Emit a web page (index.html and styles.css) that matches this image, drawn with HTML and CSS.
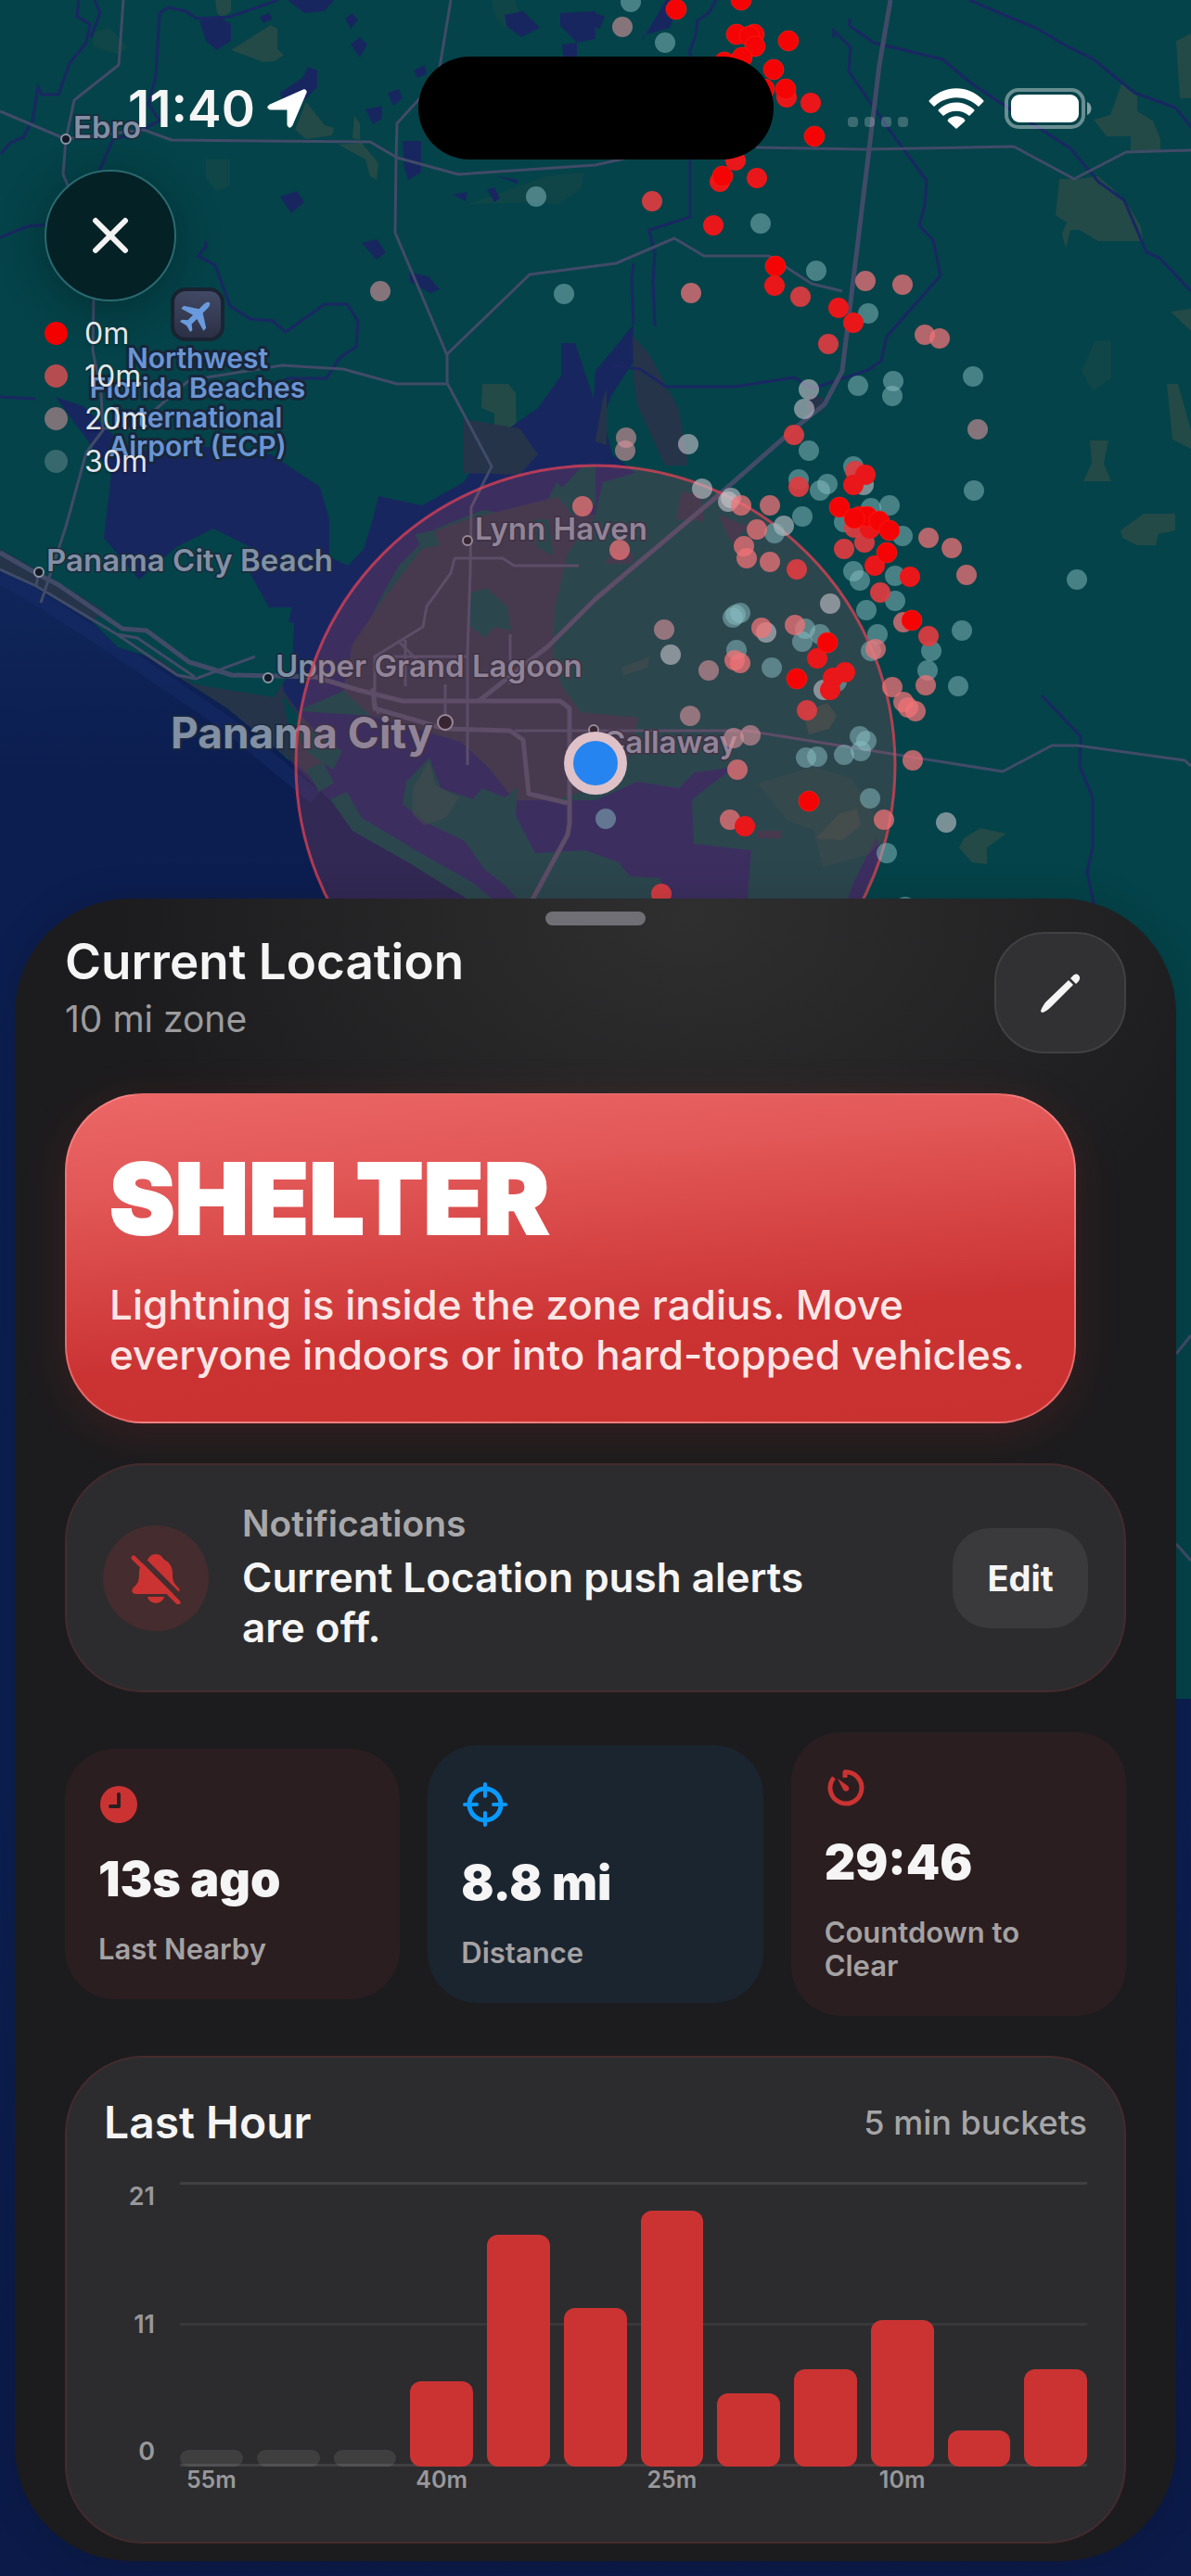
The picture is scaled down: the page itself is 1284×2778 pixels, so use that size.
FILE: index.html
```html
<!DOCTYPE html>
<html lang="en">
<head>
    <meta charset="UTF-8">
    <meta name="viewport" content="width=device-width, initial-scale=1.0">
    <title>Lightning Zone</title>
    <link rel="stylesheet" href="styles.css">
</head>
<body>
    <div class="screen">
        <svg class="map" viewBox="0 0 1284 2778" preserveAspectRatio="xMidYMin slice" aria-label="Map of lightning strikes">
            <defs>
                <linearGradient id="poi" x1="0" y1="0" x2="0" y2="1">
                    <stop offset="0" stop-color="#444b66"/>
                    <stop offset="1" stop-color="#2a2f45"/>
                </linearGradient>
                <linearGradient id="gulf" x1="0" y1="0" x2="0" y2="1">
                    <stop offset="0" stop-color="#10265a"/>
                    <stop offset="0.1" stop-color="#0c1e50"/>
                    <stop offset="0.6" stop-color="#0c1f50"/>
                    <stop offset="1" stop-color="#0b1a48"/>
                </linearGradient>
            </defs>

            <rect class="land" width="1284" height="2778"/>

            <!-- parks and forest -->
            <g class="park">
                <path d="M232 0h17v12l-9 8-6-6z"/>
                <path d="M249 54l43-27 7 4v22l7 6-10 7-12 1z"/>
                <path d="M330 110l20 25 10 3-2 8-28 4-12-10z"/>
                <path d="M382 125l6 8v18l-8-2zM365 156l25-2 18 22-2 18-7-4-5-18z"/>
                <path d="M1210 88l16 16v16l17 10 8 20v12h-32v-15h-26l-14-18 18-5z"/>
                <path d="M1142 193l20 0 22-3 16 14 18 20 12 20 2 16h-48l-20-12h-10l-5 20-4-16 5-12-12-8z"/>
                <path d="M1268 44l16-8v70h-12z"/>
                <path d="M1262 336l22-3v24zM1258 414l12 0 14 50v20l-20-10z"/>
                <path d="M520 414h28l8 10 1 60-14 6-10-14v-30l-14-6z"/>
                <path d="M1175 475h20l-5 25 8 19h-30l9-20z"/>
                <path d="M1233 554h34v18l-18 4-3 12h-20l-16-8-2-8z"/>
                <path d="M1057 893l28 6-21 15v18l-16-2-14-16 5-10z"/>
            </g>
            <g class="park faint">
                <path d="M222 172l26 0v28l-14 6-12-14zM102 34l16-4 20 22-12 6-26-8z"/>
                <path d="M590 190l40-4-4 18-24 16-28-2-68 2z"/>
                <path d="M530 0h25l6 20-16 10-10-10zM1180 368h18v40l-20 14-12-22z"/>
            </g>

            <!-- inland lakes -->
            <g class="water">
                <path d="M215 22l22-4 12 8v18l-15 10-12-10z"/>
                <path d="M302 100l24-16 6-12 10 4v18l-14 14-22 8z"/>
                <path d="M310 0h50l-10 12-22 2zM372 20l8-6 6 8-8 9zM280 18l10-4 4 6-10 5z"/>
                <path d="M378 48l10-8 8 8-8 14zM446 76l12-6 2 10-10 4zM418 100l12-4 4 10-10 8z"/>
                <path d="M394 118l18-4v14l-10 6zM434 152l20 0v34l-14 8-4-12z"/>
                <path d="M302 212l18-6 8 12-14 12zM390 262l16-4 10 14-10 8zM442 294l20 4 12 14-10 4-22-12z"/>
                <path d="M544 16l20-4 18 18-20 10-16-12zM604 14l38-2v30l-20 4-18-18zM606 48l16-2v24l-14-4z"/>
                <path d="M536 190l22 4v4zM525 204l8-2 6 12-6 4zM488 210l16-3-2 10z"/>
                <path d="M692 44l26-44h16l-12 30-28 8zM642 14l10 4-6 14-8-6z"/>
            </g>

            <!-- bays -->
            <g class="water">
                <path d="M60 428L90 438 112 460 142 488 205 480 292 490 345 525 355 560 355 600 375 610 392 592 402 560 408 535 455 545 500 520 530 475 580 440 605 405 605 370 620 370 640 430 642 400 683 350 683 390 660 425 650 450 660 490 685 510 650 520 640 560 600 520 580 560 520 550 470 570 430 610 405 655 385 700 370 745 325 765 305 745 305 695 315 655 290 655 265 610 270 590 230 570 190 590 150 625 112 580 120 510z"/>
                <path d="M305 690L325 767 400 772 497 800 526 827 555 863 598 863 642 863 687 843 732 850 749 833 793 827 765 847 746 863 748 910 810 917 804 990 320 990z"/>
                <path d="M945 902l5 20-18 40-6 20h-16l10-30z"/>
            </g>

            <!-- the Gulf -->
            <path class="gulf" d="M0 614l39 18 87 52 65 45 53 34 51 42 46 43 15 15 65 50 105 60v859h758v966H0z"/>
            <path class="shore" d="M0 622l39 22 87 56 118 80 96 80"/>

            <!-- built-up areas -->
            <g class="urban">
                <path d="M0 592l60 34 70 44 70 30 100-10 6 56 24 32 30 30-20 34-45-37-51-42-53-34-152-97-39-18z"/>
                <path d="M470 572L504 560 600 536 642 556 612 596 598 656 596 706 606 740 626 768 688 774 682 800 672 836 640 850 598 863 555 863 526 827 497 800 400 772 370 745 380 695 414 645z"/>
                <path d="M682 362l18 20 32 60 10 60h-25l-30-66-4-30zM500 452l60 10 20 28-20 22-60-2z"/>
                <path d="M735 530l20 4 4 28-30-2zM775 555l34 14-12 6 2 20-14-16zM660 596h22v12h-30zM817 896h26v8h-26z"/>
                <path d="M870 425l18 4-2 16-14-2zM650 430l4-10v60l-12-4z"/>
            </g>

            <!-- woods and islands lying inside the bays -->
            <g class="land">
                <path d="M185 600l32-14 40 16 6 60 54 10-2 50-20 30-86-14-36-26-46-14-28-28z"/>
                <path d="M305 750l22 30 42 30-10 20-24-16-24-30z"/>
                <path d="M330 830l18-8 12 22-16 10z"/>
                <path d="M356 862l18-8 16 28 60 36 60 34 40 34h-20l-90-56-60-34z"/>
                <path d="M463 817L475 850 510 862 520 850 545 860 558 848 556 880 577 920 631 917 667 930 679 945 712 947 724 990 575 990 547 957 522 937 501 907 459 887 434 867 438 843z"/>
                <path d="M505 640l20-6 22 20 4 26-18-4-10 12-20-16zM575 560l16 0 6 40-18-10zM448 576l20-4 6 16-20 4z"/>
                <path d="M626 504l16-2v44l-24 10-20-24 12-10z"/>
            </g>
            <g class="park">
                <path d="M445 850l18-30 6 26 26 14-14 22-24 8-12-12z" opacity=".5"/>
                <path d="M817 845l60-18 40 12 40 60-20 22-50 14-10-40-28-10z" opacity=".4"/>
                <path d="M866 768l26-10 10 14-8 14-22 6zM904 878l20-6 4 18-20 16-28-2z"/>
                <path d="M670 720l30-12-2 12-26 8z" opacity=".6"/>
            </g>

            <!-- creeks -->
            <g class="creek">
                <path d="M85 0l-2 18 14 8-4 20-18 22-12 34-18 0-4-8-6 36-10 18-14 6-10 12M102 0l6 14-10 26"/>
                <path d="M300 0l-52 18-36 2-12-8-18-4-10 6-4 68-8 30 12 18-26 14-24 6-26 60-20 30-46 4-30 12"/>
                <path d="M222 260v6l-8 10 18 10 16 44 22 14 24 2 14 12 42-30h24l12 18-2 28-18 12-14 22h-42l-26 16-14 0M0 428l38 2"/>
                <path d="M772 0l-8 14-12 8-2 16-6 16v180l-44 14 6 26-2 30 2 48"/>
                <path d="M683 284l-2 16 2 50M660 394l30 4 28 19h74l64-10 20 12 60-20 14-10 6-26 58-66-8-38-15-16 6-22 2-26-44-60-26-38-14-20 2-26-18-18V41"/>
                <path d="M1045 0l42 18 30 12 30 18 32 16 44 36 44 16 20 24M916 20v8l26 18 74 18 34 28 70 46 34 22 30 36 28 20 24 56 14 6 34 36"/>
                <path d="M1123 750l42 44-1 32 14 34v54l-6 26 10 48"/>
            </g>

            <!-- roads -->
            <g class="road">
                <path d="M133 0l-5 70-48 38-9 42-3 38 34 80-2 110 9 46 2 40-18 24-22 80-27 82M0 120l71 30 84-10 30 11 214 2 29 17 66 18 148-10 62-14"/>
                <path d="M486 0l-14 85-44 48-1 38-1 80 56 132v30l48 90-22 44-1 68-3 90v120M110 462h34l60-52 100-16 66 4 58 16h54M482 382l89-86 93-12 63-27 32 19h70l46 30 33 8"/>
                <path d="M490 602h52l12 8h70M490 602l-4 16-26 36-4 22-52 32v18l0 30 4 14M404 708h100M437 690v50M430 692l20 20M550 684v54M480 738v40"/>
                <path d="M815 159l116 2 162-3 65 35 56-29 70-2"/>
                <path d="M0 614l39 18 87 52 65 44 20 4 64-24M126 684l22 4 62 42M42 617l-3 14M555 788h250l276 44 53-28h28l115 16 7 6"/>
                <path d="M1268 1460l16-20M1268 1665l16 18"/>
            </g>
            <g class="road wide">
                <path d="M960 0l-12 70-40 330-19 36-30 24-89 78-128 108-50 50-76 60M0 596l42 24 20 10 70 48 26 2 46 34 46 14 90 2 46 14 48 12h170l10 8v124l-2 12-40 74 8 40 38 44"/>
                <path d="M402 742l2 22 76 22 70 2 14 10 6 58 42 10"/>
            </g>

            <!-- places -->
            <g class="place">
                <circle cx="71" cy="150" r="5"/><text x="79" y="149">Ebro</text>
                <circle cx="42" cy="617" r="5"/><text x="50" y="616">Panama City Beach</text>
                <circle cx="504" cy="583" r="5"/><text x="512" y="582">Lynn Haven</text>
                <circle cx="289" cy="731" r="5"/><text x="297" y="730">Upper Grand Lagoon</text>
                <circle cx="640" cy="787" r="5"/><text x="650" y="812">Callaway</text>
                <circle cx="480" cy="779" r="8"/><text class="city" x="184" y="807">Panama City</text>
            </g>
            <rect x="186" y="312" width="54" height="54" rx="14" fill="url(#poi)" stroke="#1a2432" stroke-width="4"/>
            <path d="M0-18c2 0 3 3 3 5v8l14 9v4L3 4v8l5 4v3l-8-2-8 2v-3l5-4V4l-14 4V4l14-9v-8c0-2 1-5 3-5z" transform="translate(213 339) rotate(45)" fill="#6a9bde"/>
            <g class="airport">
                <text x="213" y="397">Northwest</text>
                <text x="213" y="429">Florida Beaches</text>
                <text x="213" y="461">International</text>
                <text x="213" y="492">Airport (ECP)</text>
            </g>

            <circle class="zone" cx="642" cy="825" r="323"/>
            <g id="strikes"></g>
            <circle cx="642" cy="823" r="34" fill="#dfc1c8"/>
            <circle cx="642" cy="823" r="24" fill="#2684f0"/>
        </svg>

        <header class="status-bar">
            <div class="status-left">
                <span class="clock">11:40</span>
                <svg width="44" height="44" viewBox="0 0 44 44"><path d="M39 2c2-1 4 1 3 3L27 40c-1 3-5 3-5-1V23L4 23c-4 0-4-4-1-5z" fill="#fff" stroke="#fff" stroke-linejoin="round"/></svg>
            </div>
            <div class="island"></div>
            <div class="status-right">
                <div class="signal"><i></i><i></i><i></i><i></i></div>
                <svg width="60" height="44" viewBox="0 0 60 44" fill="#fff">
                    <path d="M1 13C17-4 43-4 59 13q1 1 0 2l-5 5c-14-13-34-13-48 0l-5-5q-1-1 0-2z"/>
                    <path d="M11 23c11-10 27-10 38 0q1 1 0 2l-5 5c-8-7-20-7-28 0l-5-5q-1-1 0-2z"/>
                    <path d="M21 34c5-5 13-5 18 0q1 1 0 2l-9 8-9-8q-1-1 0-2z"/>
                </svg>
                <svg width="96" height="44" viewBox="0 0 96 44">
                    <rect x="2" y="2" width="83" height="40" rx="13" fill="none" stroke="#fff" stroke-opacity=".4" stroke-width="4"/>
                    <rect x="7" y="7" width="73" height="30" rx="9" fill="#fff"/>
                    <path d="M89 15c6 2 6 12 0 14z" fill="#fff" fill-opacity=".5"/>
                </svg>
            </div>
        </header>

        <div class="map-controls">
            <button class="close-btn" aria-label="Close">
                <svg width="40" height="40" viewBox="0 0 40 40"><path d="M4 4l32 32M36 4L4 36" stroke="#f2f2f2" stroke-width="6" stroke-linecap="round"/></svg>
            </button>
            <ul class="legend">
                <li><span class="dot now"></span>0m</li>
                <li><span class="dot ten"></span>10m</li>
                <li><span class="dot twenty"></span>20m</li>
                <li><span class="dot thirty"></span>30m</li>
            </ul>
        </div>

        <main class="sheet">
            <div class="grabber"></div>
            <div class="sheet-header">
                <div>
                    <h1>Current Location</h1>
                    <p class="zone-size">10 mi zone</p>
                </div>
                <button class="edit-zone" aria-label="Edit zone">
                    <svg width="44" height="44" viewBox="0 0 44 44" fill="#f5f5f5">
                        <path d="M31 8l5 5L12 37c-3 3-6 5-9 6-1 0-2-1-2-2 1-3 3-6 5-9z"/>
                        <path d="M33 6l3-3c2-2 5-2 6 0 2 2 1 4 0 6l-3 3z"/>
                    </svg>
                </button>
            </div>

            <section class="alert-banner">
                <h2>SHELTER</h2>
                <p>Lightning is inside the zone radius. Move everyone indoors or into hard-topped vehicles.</p>
            </section>

            <section class="card notifications">
                <div class="bell">
                    <svg width="54" height="56" viewBox="0 0 54 56">
                        <path d="M27 2c5 0 7 3 9 6 7 3 9 9 9 15 0 9 2 11 6 15 3 3 1 7-3 7H6c-5 0-6-4-3-7 4-4 6-6 6-15 0-6 2-12 9-15 2-3 4-6 9-6zM18 48h18c-2 9-16 9-18 0z" fill="#cb3333"/>
                        <path d="M7 2l48 48" stroke="#452c2e" stroke-width="6"/>
                        <path d="M3 6l48 48" stroke="#cb3333" stroke-width="5" stroke-linecap="round"/>
                    </svg>
                </div>
                <div class="notif-text">
                    <h3>Notifications</h3>
                    <p>Current Location push alerts are off.</p>
                </div>
                <button class="edit-btn">Edit</button>
            </section>

            <section class="stats">
                <div class="stat danger">
                    <svg width="44" height="48" viewBox="0 0 44 48">
                        <circle cx="22" cy="24" r="20" fill="#cb3333"/>
                        <path d="M22 13v13h-9" fill="none" stroke="#2b1e20" stroke-width="4" stroke-linecap="round" stroke-linejoin="round"/>
                    </svg>
                    <strong>13s ago</strong>
                    <span>Last Nearby</span>
                </div>
                <div class="stat info">
                    <svg width="52" height="56" viewBox="0 0 52 56" fill="none" stroke="#0a9aff" stroke-linecap="round">
                        <circle cx="26" cy="28" r="17" stroke-width="5"/>
                        <path d="M26 6v13M26 37v13M4 28h13M35 28h13" stroke-width="4"/>
                    </svg>
                    <strong>8.8 mi</strong>
                    <span>Distance</span>
                </div>
                <div class="stat danger">
                    <svg width="44" height="48" viewBox="0 0 44 48">
                        <path d="M22 13V7a17 17 0 1 1-12 6" fill="none" stroke="#cb3333" stroke-width="5" stroke-linejoin="round"/>
                        <path d="M14 14l11 8c4 4-2 8-5 4z" fill="#cb3333"/>
                    </svg>
                    <strong>29:46</strong>
                    <span>Countdown to Clear</span>
                </div>
            </section>

            <section class="card chart-card">
                <div class="chart-header">
                    <h3>Last Hour</h3>
                    <span>5 min buckets</span>
                </div>
                <div class="chart">
                    <div class="y-axis"><span>21</span><span>11</span><span>0</span></div>
                    <div class="plot" id="plot"></div>
                    <div class="x-axis" id="x-axis"></div>
                </div>
            </section>
        </main>
    </div>

    <script>
        // x, y on the map, then age: 0 = newest ... 6 = oldest
        const strikes = [
            [680, 2, 6], [671, 29, 4], [717, 46, 6], [820, 241, 6], [578, 212, 6], [608, 317, 6], [410, 314, 4],
            [880, 292, 6], [936, 338, 6], [1049, 406, 6], [963, 411, 6], [962, 427, 6], [925, 416, 6], [872, 420, 5],
            [867, 441, 5], [872, 486, 6], [1054, 463, 4], [675, 472, 4], [674, 486, 4], [742, 479, 5], [920, 503, 6],
            [931, 523, 5], [861, 517, 6], [892, 522, 6], [884, 529, 6], [1050, 529, 6], [757, 527, 5], [788, 537, 5],
            [785, 541, 5], [959, 545, 6], [939, 548, 6], [865, 557, 6], [845, 567, 5], [835, 575, 6], [910, 563, 6],
            [973, 578, 6], [920, 616, 6], [927, 626, 6], [965, 621, 6], [965, 648, 6], [895, 651, 5], [934, 658, 6],
            [1161, 625, 6], [1037, 680, 6], [946, 684, 6], [939, 702, 6], [1004, 702, 6], [1000, 723, 6], [1033, 740, 6],
            [798, 661, 6], [790, 666, 6], [793, 663, 6], [716, 679, 4], [826, 682, 5], [868, 678, 6], [884, 684, 6],
            [865, 692, 6], [888, 744, 5], [902, 735, 6], [794, 701, 6], [832, 720, 6], [723, 706, 5], [764, 723, 4],
            [744, 772, 4], [809, 793, 4], [791, 796, 4], [927, 794, 6], [934, 799, 6], [928, 810, 6], [910, 814, 6],
            [881, 816, 6], [869, 817, 6], [938, 861, 6], [1020, 887, 5], [956, 920, 6], [653, 883, 6], [976, 978, 6],
            [628, 546, 3], [933, 303, 3], [973, 307, 3], [745, 316, 3], [997, 361, 3], [1013, 365, 3], [799, 545, 3],
            [830, 545, 3], [816, 571, 3], [1001, 580, 3], [1026, 591, 3], [1042, 620, 3], [668, 593, 3], [802, 589, 3],
            [805, 602, 3], [830, 606, 3], [974, 671, 3], [944, 700, 3], [998, 739, 3], [962, 741, 3], [974, 757, 3],
            [979, 763, 3], [987, 767, 3], [821, 677, 3], [857, 674, 3], [792, 712, 3], [798, 715, 3], [795, 830, 3],
            [984, 820, 3], [787, 884, 3], [953, 884, 3],
            [863, 320, 2], [893, 371, 2], [856, 469, 2], [922, 508, 2], [861, 525, 2], [921, 569, 2], [859, 614, 2],
            [910, 592, 2], [932, 585, 2], [949, 639, 2], [1001, 686, 2], [870, 766, 2], [713, 964, 2], [703, 217, 2],
            [848, 105, 1], [874, 111, 1], [793, 173, 1], [776, 196, 1], [816, 192, 1], [769, 243, 1], [835, 308, 1],
            [904, 332, 1], [920, 348, 1], [933, 512, 1], [920, 523, 1], [938, 570, 1], [943, 610, 1], [981, 622, 1],
            [881, 710, 1], [911, 725, 1], [898, 731, 1], [895, 744, 1], [803, 891, 1],
            [729, 10, 0], [799, 0, 0], [794, 37, 0], [813, 37, 0], [808, 39, 0], [814, 50, 0], [850, 44, 0],
            [781, 67, 0], [800, 62, 0], [834, 75, 0], [824, 96, 0], [847, 96, 0], [878, 147, 0], [779, 190, 0],
            [836, 287, 0], [905, 547, 0], [927, 557, 0], [935, 557, 0], [921, 559, 0], [948, 562, 0], [959, 572, 0],
            [956, 596, 0], [983, 669, 0], [892, 693, 0], [859, 732, 0], [872, 864, 0]
        ];

        const layer = document.getElementById('strikes');
        strikes.forEach(([x, y, age]) => {
            const c = document.createElementNS('http://www.w3.org/2000/svg', 'circle');
            c.setAttribute('cx', x);
            c.setAttribute('cy', y);
            c.setAttribute('r', 11);
            c.setAttribute('class', 'age-' + age);
            layer.appendChild(c);
        });

        // strikes per 5 minutes, oldest first
        const buckets = [0, 0, 0, 7, 19, 13, 21, 6, 8, 12, 3, 8];
        const max = Math.max(...buckets);
        const plot = document.getElementById('plot');
        const axis = document.getElementById('x-axis');

        buckets.forEach((count, i) => {
            const bar = document.createElement('div');
            bar.className = count ? 'bar' : 'bar empty';
            bar.style.height = (count ? count / max * 90 : 6) + '%';
            plot.appendChild(bar);

            const label = document.createElement('span');
            label.textContent = i % 3 === 0 ? (55 - i * 5) + 'm' : '';
            axis.appendChild(label);
        });
    </script>
</body>
</html>
```

FILE: styles.css
```css
* {
    margin: 0;
    padding: 0;
    box-sizing: border-box;
}

body {
    font-family: Inter, "Liberation Sans", sans-serif;
    background: #0c1f50;
    color: #f5f5f5;
}

button {
    font: inherit;
    color: inherit;
    border: none;
    cursor: pointer;
}

.screen {
    position: relative;
    min-height: 100vh;
    display: flex;
    flex-direction: column;
    overflow: hidden;
}

/* map */

.map {
    position: absolute;
    inset: 0;
    width: 100%;
    height: 100%;
}

.land { fill: #044349; }
.water { fill: #182660; }
.urban { fill: #26344a; }
.park { fill: #234a47; }
.faint { opacity: 0.4; }
.gulf { fill: url(#gulf); }

.shore {
    fill: none;
    stroke: #162a66;
    stroke-width: 16;
    opacity: 0.6;
}

.creek {
    fill: none;
    stroke: #1a2763;
    stroke-width: 3;
}

.road {
    fill: none;
    stroke: #414b68;
    stroke-width: 3;
    stroke-linejoin: round;
}

.road.wide {
    stroke-width: 5;
}

.place circle {
    fill: #131a26;
    stroke: #8c95a5;
    stroke-width: 2;
}

.place text {
    font-size: 33px;
    font-weight: 600;
    fill: #8290a5;
    stroke: #1c2a3c;
    stroke-width: 3;
    paint-order: stroke;
}

.place .city {
    font-size: 46px;
    font-weight: 700;
}

.airport text {
    font-size: 30px;
    font-weight: 600;
    text-anchor: middle;
    fill: #6b95d3;
    stroke: #17263a;
    stroke-width: 6;
    stroke-linejoin: round;
    paint-order: stroke;
}

.zone {
    fill: rgba(204, 85, 100, 0.2);
    stroke: rgba(225, 65, 85, 0.75);
    stroke-width: 3;
}

.age-0 { fill: #f40404; stroke: #ff2a20; stroke-opacity: 0.5; }
.age-1 { fill: #e9171a; }
.age-2 { fill: #dd3c40; fill-opacity: 0.92; }
.age-3 { fill: #f07377; fill-opacity: 0.74; }
.age-4 { fill: #d7939b; fill-opacity: 0.62; }
.age-5 { fill: #c9c4cc; fill-opacity: 0.6; }
.age-6 { fill: #8ac0c4; fill-opacity: 0.5; }

/* status bar */

.status-bar {
    position: relative;
    display: grid;
    grid-template-columns: 1fr 383px 1fr;
    align-items: center;
    padding-top: 61px;
}

.status-left {
    display: flex;
    align-items: center;
    gap: 13px;
    padding-left: 138px;
}

.clock {
    font-size: 55px;
    font-weight: 600;
}

.island {
    height: 111px;
    border-radius: 56px;
    background: #000;
}

.status-right {
    display: flex;
    align-items: center;
    justify-content: flex-end;
    gap: 22px;
    padding-right: 105px;
}

.signal {
    display: flex;
    gap: 7px;
    padding-top: 30px;
}

.signal i {
    width: 11px;
    height: 11px;
    border-radius: 4px;
    background: rgba(255, 255, 255, 0.22);
}

/* close button and legend */

.map-controls {
    position: relative;
    padding: 11px 48px 0;
}

.close-btn {
    display: flex;
    align-items: center;
    justify-content: center;
    width: 142px;
    height: 142px;
    border-radius: 50%;
    background: #042126;
    border: 2px solid #2a6a70;
    box-shadow: 0 8px 50px rgba(0, 0, 0, 0.3);
}

.legend {
    list-style: none;
    margin-top: 11px;
}

.legend li {
    display: flex;
    align-items: center;
    gap: 18px;
    height: 46px;
    font-size: 32px;
    color: #e2e6ea;
    text-shadow: 0 1px 3px rgba(0, 0, 0, 0.5);
}

.dot {
    width: 25px;
    height: 25px;
    border-radius: 50%;
}

.now { background: #f30000; }
.ten { background: #b54d50; }
.twenty { background: #7b7277; }
.thirty { background: #36686e; }

/* sheet */

.sheet {
    position: relative;
    display: flex;
    flex-direction: column;
    gap: 43px;
    margin: auto 16px 16px;
    padding: 36px 54px 19px;
    border-radius: 124px;
    background: radial-gradient(ellipse 620px 420px at 58% 20px, #2f2f30, #1c1c1e) #1c1c1e;
    box-shadow: 0 0 40px rgba(0, 0, 0, 0.15);
}

.grabber {
    position: absolute;
    top: 14px;
    left: 50%;
    width: 108px;
    height: 15px;
    margin-left: -54px;
    border-radius: 8px;
    background: #6f6f75;
}

.sheet-header {
    display: flex;
    justify-content: space-between;
}

h1 {
    font-size: 53px;
    line-height: 64px;
    font-weight: 600;
}

.zone-size {
    margin-top: 8px;
    font-size: 39px;
    line-height: 44px;
    color: #9c9c9e;
}

.edit-zone {
    display: flex;
    align-items: center;
    justify-content: center;
    width: 142px;
    height: 131px;
    border-radius: 54px;
    background: #313133;
    border: 2px solid #414143;
}

.alert-banner {
    margin-right: 54px;
    padding: 52px 46px 45px;
    border: 2px solid rgba(255, 150, 150, 0.55);
    border-radius: 84px;
    background: linear-gradient(175deg, #ec6767 0%, #e25757 25%, #cb3333 68%, #c93131 100%);
    box-shadow: 0 10px 50px rgba(204, 51, 51, 0.16);
}

.alert-banner h2 {
    font-size: 106px;
    line-height: 120px;
    font-weight: 900;
    color: #fff;
    -webkit-text-stroke: 2px #fff;
}

.alert-banner p {
    margin-top: 27px;
    font-size: 44px;
    line-height: 54px;
    font-weight: 500;
    color: #fbe6e6;
}

.card {
    border: 2px solid #452b2d;
    border-radius: 84px;
    background: #2c2c2e;
}

.notifications {
    display: flex;
    align-items: center;
    gap: 36px;
    padding: 41px 39px;
}

.bell {
    display: flex;
    align-items: center;
    justify-content: center;
    width: 114px;
    height: 114px;
    flex-shrink: 0;
    border-radius: 50%;
    background: #452c2e;
}

.notif-text {
    flex: 1;
}

.notif-text h3 {
    font-size: 39px;
    line-height: 44px;
    font-weight: 600;
    color: #a8a8aa;
}

.notif-text p {
    max-width: 640px;
    margin-top: 9px;
    font-size: 44px;
    line-height: 54px;
    font-weight: 600;
}

.edit-btn {
    width: 146px;
    height: 108px;
    border-radius: 40px;
    background: #3a3a3c;
    font-size: 38px;
    font-weight: 700;
}

.stats {
    display: grid;
    grid-template-columns: repeat(3, 1fr);
    align-items: center;
    gap: 30px;
}

.stat {
    display: flex;
    flex-direction: column;
    align-items: flex-start;
    gap: 27px;
    padding: 36px;
    border-radius: 54px;
}

.danger { background: #2b1e20; }
.info { background: #1b2530; }

.stat strong {
    font-size: 52px;
    line-height: 60px;
    font-weight: 900;
}

.stat span {
    font-size: 31px;
    line-height: 36px;
    font-weight: 600;
    color: #a5a2a3;
}

.chart-card {
    padding: 40px 40px 45px;
}

.chart-header {
    display: flex;
    align-items: center;
    justify-content: space-between;
}

.chart-header h3 {
    font-size: 48px;
    line-height: 60px;
    font-weight: 600;
}

.chart-header span {
    font-size: 36px;
    font-weight: 500;
    color: #a5a5a7;
}

.chart {
    display: grid;
    grid-template-columns: 55px 1fr;
    column-gap: 27px;
    margin-top: 34px;
}

.y-axis {
    display: flex;
    flex-direction: column;
    justify-content: space-between;
    text-align: right;
    font-size: 27px;
    line-height: 32px;
    font-weight: 600;
    color: #98989b;
}

.plot {
    display: flex;
    align-items: flex-end;
    gap: 15px;
    height: 307px;
    background:
        linear-gradient(#404042, #404042) top / 100% 3px no-repeat,
        linear-gradient(#38383a, #38383a) center / 100% 3px no-repeat,
        linear-gradient(#404042, #404042) bottom / 100% 3px no-repeat;
}

.bar {
    flex: 1;
    border-radius: 12px;
    background: #cb3333;
}

.bar.empty {
    background: rgba(255, 255, 255, 0.09);
}

.x-axis {
    grid-column: 2;
    display: flex;
    gap: 15px;
    height: 36px;
    font-size: 25px;
    line-height: 28px;
    font-weight: 600;
    color: #98989b;
}

.x-axis span {
    flex: 1;
    text-align: center;
}
```
